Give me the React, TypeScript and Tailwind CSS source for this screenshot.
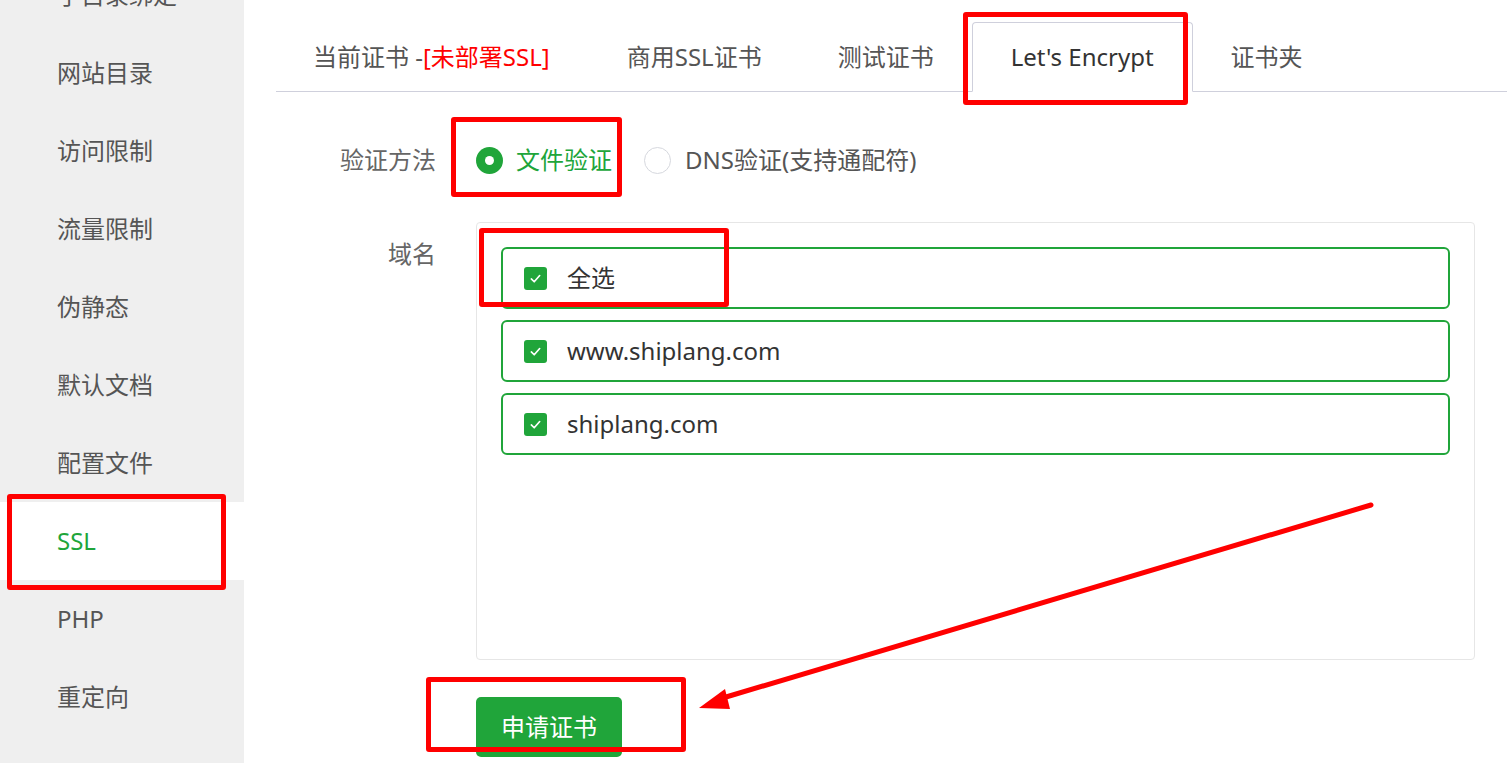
import React from "react";

const side = ["子目录绑定", "网站目录", "访问限制", "流量限制", "伪静态", "默认文档", "配置文件", "SSL", "PHP", "重定向"];
const domains = ["全选", "www.shiplang.com", "shiplang.com"];

function Check() {
  return (
    <span className="flex h-[23px] w-[23px] shrink-0 items-center justify-center rounded-[3px] bg-[#20a53a]">
      <svg width="13" height="13" viewBox="0 0 14 14" fill="none">
        <path d="M2.5 7.5 L5.6 10.5 L11.5 3.8" stroke="white" strokeWidth="1.8" strokeLinecap="round" strokeLinejoin="round" />
      </svg>
    </span>
  );
}

export default function App() {
  return (
    <div className="relative flex h-[763px] w-[1507px] overflow-hidden bg-white font-['Noto_Sans','Noto_Sans_CJK_SC',sans-serif]">
      <aside className="flex w-[244px] shrink-0 flex-col bg-[#efefef]">
        <div className="-mt-[44px] flex flex-col">
          {side.map((s) => (
            <div
              key={s}
              className={
                s === "SSL"
                  ? "flex h-[78px] items-center bg-white pl-[57px] text-[24px] leading-[30px] text-[#20a53a]"
                  : "flex h-[78px] items-center pl-[57px] text-[24px] leading-[30px] text-[#555]"
              }
            >
              {s}
            </div>
          ))}
        </div>
      </aside>

      <main className="flex flex-1 flex-col pl-[32px] pt-[22px]">
        <div className="flex h-[70px] items-stretch border-b border-[#cfd0dc]">
          <div className="flex items-center pl-[37px] pr-[39px] text-[24px] text-[#555]">
            当前证书 -<span className="text-[#ff0000]">[未部署SSL]</span>
          </div>
          <div className="flex items-center px-[38px] text-[24px] text-[#555]">商用SSL证书</div>
          <div className="flex items-center px-[38px] text-[24px] text-[#555]">测试证书</div>
          <div className="-mb-px flex items-center rounded-t-[4px] border border-[#cfd0dc] border-b-white bg-white px-[38px] text-[24px] text-[#333]">
            Let's Encrypt
          </div>
          <div className="flex items-center px-[38px] text-[24px] text-[#555]">证书夹</div>
        </div>

        <div className="mt-[44px] flex h-[48px] items-center">
          <div className="w-[160px] text-right text-[24px] text-[#666]">验证方法</div>
          <div className="ml-[40px] flex items-center">
            <span className="flex h-[27px] w-[27px] items-center justify-center rounded-full bg-[#20a53a]">
              <span className="h-[9px] w-[9px] rounded-full bg-white" />
            </span>
            <span className="ml-[13px] text-[24px] text-[#20a53a]">文件验证</span>
            <span className="ml-[32px] h-[27px] w-[27px] rounded-full border border-[#d6d8de] bg-white" />
            <span className="ml-[14px] text-[24px] text-[#555]">DNS验证(支持通配符)</span>
          </div>
        </div>

        <div className="mt-[38px] flex">
          <div className="w-[160px] pt-[17px] text-right text-[24px] leading-[30px] text-[#666]">域名</div>
          <div className="ml-[40px] mr-[32px] flex h-[438px] flex-1 flex-col gap-[11px] rounded-[4px] border border-[#e6e6e6] px-[24px] pt-[24px]">
            {domains.map((d) => (
              <div key={d} className="flex h-[62px] items-center rounded-[6px] border-2 border-[#20a53a] pl-[21px]">
                <Check />
                <span className="ml-[20px] text-[24px] text-[#333]">{d}</span>
              </div>
            ))}
          </div>
        </div>

        <div className="ml-[200px] mt-[37px]">
          <button className="flex h-[60px] w-[146px] items-center justify-center rounded-[5px] bg-[#20a53a] text-[24px] text-white">
            申请证书
          </button>
        </div>
      </main>

      {/* annotations */}
      <div className="absolute left-[7px] top-[494px] h-[96px] w-[219px] rounded-[3px] border-[5px] border-[#ff0000]" />
      <div className="absolute left-[963px] top-[12px] h-[93px] w-[225px] rounded-[3px] border-[5px] border-[#ff0000]" />
      <div className="absolute left-[451px] top-[117px] h-[80px] w-[171px] rounded-[3px] border-[5px] border-[#ff0000]" />
      <div className="absolute left-[479px] top-[228px] h-[79px] w-[250px] rounded-[3px] border-[5px] border-[#ff0000]" />
      <div className="absolute left-[426px] top-[677px] h-[75px] w-[260px] rounded-[3px] border-[5px] border-[#ff0000]" />
      <svg className="absolute left-0 top-0" width="1507" height="763" viewBox="0 0 1507 763">
        <line x1="1371" y1="505" x2="716" y2="700" stroke="#ff0000" strokeWidth="5" strokeLinecap="round" />
        <polygon points="699,708 725,689 730,709" fill="#ff0000" />
      </svg>
    </div>
  );
}
